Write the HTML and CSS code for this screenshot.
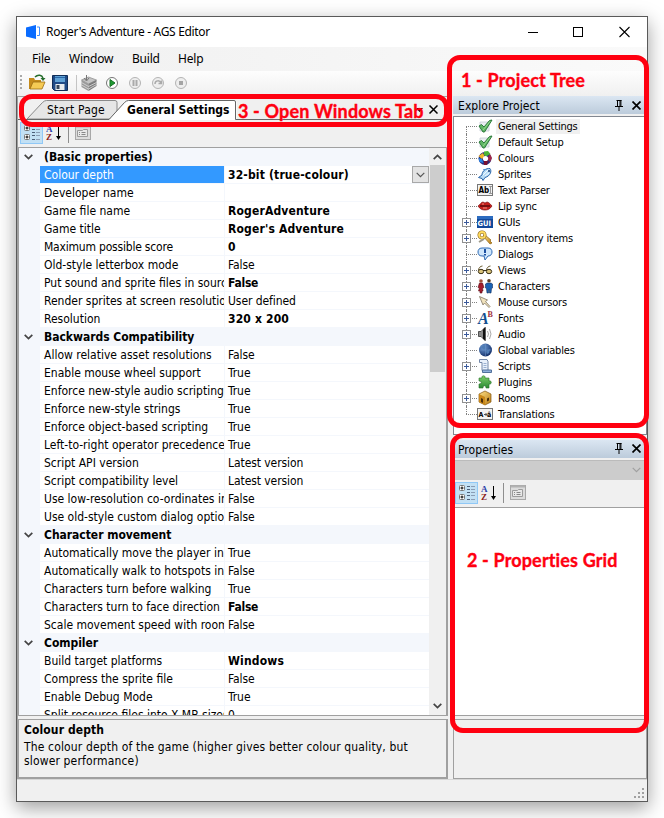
FILE: index.html
```html
<!DOCTYPE html>
<html lang="en">
<head>
<meta charset="utf-8">
<title>Roger's Adventure - AGS Editor</title>
<link rel="stylesheet" href="styles.css">
</head>
<body>
<svg class="defs" width="0" height="0">
  <defs>
    <linearGradient id="gold" x1="0" y1="0" x2="1" y2="1"><stop offset="0" stop-color="#ffe38a"/><stop offset="1" stop-color="#b87a10"/></linearGradient>
    <linearGradient id="green" x1="0" y1="0" x2="0" y2="1"><stop offset="0" stop-color="#7fd06a"/><stop offset="1" stop-color="#2c8a35"/></linearGradient>
    <radialGradient id="globe" cx=".35" cy=".3" r=".8"><stop offset="0" stop-color="#6f9cd6"/><stop offset="1" stop-color="#0c2660"/></radialGradient>
  </defs>
  <symbol id="check" viewBox="0 0 16 16"><path d="M3 4h9v9H3z" fill="#e9edf2" stroke="#c5ccd6" stroke-width=".8"/><path d="M2 8l2.500-1.500L7 9l5.500-6.500L15 2 7.500 14H6z" fill="#5fb565" stroke="#2c7a3c" stroke-width="1"/><path d="M6 12l7-8.500" stroke="#94dc8c" stroke-width="1"/></symbol>
  <symbol id="colours" viewBox="0 0 16 16"><circle cx="8" cy="8.500" r="6.500" fill="#2b2a78"/><path d="M7 1.500l4-.5 2.500 3L9 6.500 7 5z" fill="#4db536"/><path d="M13 4l2 4-2 4-3-3z" fill="#a02848"/><path d="M1.500 6L6 3l1.500 3.500L5 9z" fill="#f2b62a"/><path d="M1.500 8l3.500 1 1.500 4-4-1z" fill="#2784e6"/><path d="M7 11l4 0-1 4H7z" fill="#7a1030"/><circle cx="8.500" cy="8.500" r="2.600" fill="#fff"/></symbol>
  <symbol id="sprites" viewBox="0 0 16 16"><path d="M1.500 11.500L5 9c0-4 4-7 8-6.500C15 5 13.500 10 8 11.500l-2 3-1-2z" fill="#b8dcf6" stroke="#2864a8"/><path d="M6 9l5-5M8 10l4-3" stroke="#f2faff"/><path d="M7 5l-1-2 4 0z" fill="#4f8fd0"/><circle cx="12" cy="5" r="1" fill="#173b70"/></symbol>
  <symbol id="lips" viewBox="0 0 16 16"><path d="M1 8c2-1 3-4 5-4l2 1 2-1c2 0 4 3 5 4-2 3-4 4-7 4S3 11 1 8z" fill="#c8201c" stroke="#7c1010" stroke-width=".7"/><path d="M3 8h10" stroke="#200"/><path d="M5 6h2M6 10h4" stroke="#f28b7c"/></symbol>
  <symbol id="keys" viewBox="0 0 16 16"><path d="M6 6l7 8 2-1-2-2 1-1-6-5z" fill="url(#gold)" stroke="#8e6414" stroke-width=".7"/><circle cx="5" cy="5" r="3" fill="none" stroke="#8e6414" stroke-width="3"/><circle cx="5" cy="5" r="3" fill="none" stroke="#ffdc60" stroke-width="1.800"/><path d="M2 12l5-3" stroke="#9d9888" stroke-width="2"/></symbol>
  <symbol id="dialogs" viewBox="0 0 16 16"><path d="M5 2h6c3 0 4 2 4 4s-1 4-4 4l-3 4-1-4H5C2 10 1 8 1 6s1-4 4-4z" fill="#cfe6fb" stroke="#2e6bb5"/><path d="M8 3v4M8 8v1.500" stroke="#1c4fa0" stroke-width="2"/></symbol>
  <symbol id="views" viewBox="0 0 16 16"><path d="M1.500 8c0-2 2-4 4-4M9.500 8c0-2 2-4 4-4" fill="none" stroke="#6b5c30"/><ellipse cx="4" cy="9.500" rx="2.700" ry="2.200" fill="#d9c27a" stroke="#3b3218"/><ellipse cx="12" cy="9.500" rx="2.700" ry="2.200" fill="#d9c27a" stroke="#3b3218"/><path d="M6 8.500h4" stroke="#3b3218"/></symbol>
  <symbol id="chars" viewBox="0 0 16 16"><path d="M2.500 5h3L7 9.500l-1.500.5.5 3H5v2H3v-2H1.500l1-3L1 9.500z" fill="#a51c2c" stroke="#5a0d18" stroke-width=".6"/><circle cx="4" cy="3" r="1.800" fill="#a3503a"/><path d="M10 5h4l1.500 1v4l-1 .5-.500 4.500h-1.500v-3h-1v3H10l-.5-4.500-1-.5V6z" fill="#1a62b4" stroke="#0d2f60" stroke-width=".6"/><circle cx="12" cy="2.800" r="1.800" fill="#5b3a20"/></symbol>
  <symbol id="cursor" viewBox="0 0 16 16"><path d="M2.500 2.500l8 3.500-2 1.500 4.500 5-1 1-4.500-4.500L6 11z" fill="#f0e2bc" stroke="#8c8270" stroke-width=".9"/></symbol>
  <symbol id="audio" viewBox="0 0 16 16"><path d="M1.500 5.500H4l4-4v13l-4-4H1.500z" fill="#8a8a8a" stroke="#333" stroke-width=".8"/><path d="M6 3.500l2.500-2.500v14L6 12.500z" fill="#111"/><path d="M10.500 5q2 3 0 6M12.500 3q3 5 0 10" stroke="#aaa" fill="none"/></symbol>
  <symbol id="globals" viewBox="0 0 16 16"><circle cx="8.500" cy="8" r="6.500" fill="url(#globe)"/><path d="M4 5l3-2 2 2-2 3zM9 9l4-2-1 4-2 1z" fill="#4f7cb4"/><path d="M2.500 8h12M8.500 2v12" stroke="#6f97c9" stroke-width=".5"/></symbol>
  <symbol id="scripts" viewBox="0 0 16 16"><path d="M2.500 1.500H10l1 2v9H5v-8H2.500z" fill="#e9f1fb" stroke="#7287a8"/><path d="M5.500 12h9v2.500h-9z" fill="#8fb0dc" stroke="#53719b"/><path d="M6.500 5.500h3M6.500 7.500h3M6.500 9.500h3" stroke="#9cb2d2"/></symbol>
  <symbol id="plugins" viewBox="0 0 16 16"><path d="M2 4h3c-1-3 4-3 3 0h4v3c3-1 3 4 0 3v4H9c0-3-3-3-3 0H2v-4c3 0 3-3 0-3z" fill="url(#green)" stroke="#28702a" stroke-width=".6"/></symbol>
  <symbol id="rooms" viewBox="0 0 16 16"><path d="M8 1l6 3v8l-6 3-6-3V4z" fill="url(#gold)" stroke="#815411" stroke-width=".7"/><path d="M2 4l6 3v8l-6-3z" fill="#c98718"/><path d="M4 8l2 1v4l-2-1z" fill="#4b2f0a"/><path d="M10 8.500l2-1v3l-2 1z" fill="#4b2f0a"/></symbol>

  <symbol id="categorized" viewBox="0 0 16 16"><rect x=".5" y=".5" width="5" height="5" rx="1" fill="#fff" stroke="#777"/><rect x=".5" y="9.500" width="5" height="5" rx="1" fill="#fff" stroke="#777"/><path d="M1.500 3h3M3 1.500v3M1.500 12h3M3 10.500v3" stroke="#000"/><path d="M8 1.500h3M8 4.500h3M8 7.500h3M8 10.500h3M8 14.500h3" stroke="#4b5e78"/><path d="M12 1.500h4M12 4.500h4M12 7.500h4M12 10.500h4M12 14.500h4" stroke="#8a9db5"/></symbol>
  <symbol id="pages" viewBox="0 0 16 16"><rect x=".5" y=".5" width="15" height="14" fill="#dcdcdc" stroke="#a8a8a8"/><path d="M1 1.500h14" stroke="#b2b2b2" stroke-width="2"/><path d="M2.500 11.500v-6h5l1-1h4v7z" fill="#e8e8e8" stroke="#9c9c9c"/><path d="M4 7.500h1M6.500 7.500h4M4 9.500h1M6.500 9.500h4" stroke="#888"/></symbol>
  <symbol id="pin" viewBox="0 0 8 11"><path d="M2.500 0v6M1.500 .5h5M5 0v6M5.900 0v6M0 6.500h8M4 7v4" stroke="#000" fill="none"/></symbol>
  <symbol id="x" viewBox="0 0 9 9"><path d="M.5 .5l8 8M8.500 .5l-8 8" stroke="#000" stroke-width="1.700"/></symbol>
  <symbol id="chev" viewBox="0 0 9 6"><path d="M.7 .8l3.800 3.800L8.300 .8" fill="none" stroke="#444" stroke-width="1.700"/></symbol>
</svg>

<div class="window">
  <header class="titlebar">
    <svg class="app-icon" width="14" height="14" viewBox="0 0 14 14"><path d="M0 2.500L10 0v14L0 11.500z" fill="#0a6cff"/><path d="M11 2h2.500v8.500H11" fill="none" stroke="#3f8dff"/></svg>
    <span class="title">Roger's Adventure - AGS Editor</span>
    <svg class="win-buttons" width="103" height="12" viewBox="0 0 103 12" fill="none" stroke="#000"><path d="M0 6.500h10"/><rect x="45.500" y="1.500" width="9" height="9"/><path d="M91.500 1l10 10M101.500 1l-10 10" stroke-width="1.100"/></svg>
  </header>
  <nav class="menubar"><span class="m-file">File</span><span class="m-window">Window</span><span class="m-build">Build</span><span class="m-help">Help</span></nav>
  <div class="toolbar">
    <svg width="180" height="24" viewBox="0 0 180 24">
      <path d="M4 4v14" stroke="#aaa" stroke-width="2" stroke-dasharray="2 2"/>
      <g><path d="M12 7h5l1 2h6v9H12z" fill="#c48a1c"/><path d="M13 18l3-7h12l-3 7z" fill="#f5ca55" stroke="#9a6c12" stroke-width=".8"/><path d="M18 6c3-3 7-2 8 1" fill="none" stroke="#256d2c" stroke-width="1.500"/><path d="M23.500 7h5l-2.500 3z" fill="#256d2c"/></g>
      <g><path d="M35.500 4.500h15v15h-13l-2-2z" fill="#1f4a86" stroke="#102d58"/><path d="M38 5h10v6H38z" fill="#5fa2d6"/><path d="M38 6.500h10" stroke="#2c68a8"/><path d="M38.500 13h9v6h-9z" fill="#e8ecef"/><path d="M39.500 14h3v4h-3z" fill="#34465c"/></g>
      <path d="M59.500 4v16" stroke="#c4c4c4"/>
      <g><path d="M64.500 9l7-3 8 3-8 4z" fill="#c4c4c4" stroke="#888" stroke-width=".7"/><path d="M64.500 9l7 4v7l-7-4z" fill="#9a9a9a"/><path d="M71.500 13l8-4v6l-8 5z" fill="#7c7c7c"/><path d="M64.500 11.500l7 4 8-4M64.500 14l7 4 8-4.500" stroke="#ddd" stroke-width=".8" fill="none"/><path d="M69.500 4v5M67 7l2.500 3L72 7" stroke="#777" fill="none"/></g>
      <g><circle cx="95" cy="12" r="5.500" fill="#fff" stroke="#777"/><path d="M93 8.500l5 3.500-5 3.500z" fill="#1f9a32" stroke="#167125"/></g>
      <g fill="#eee" stroke="#b4b4b4"><circle cx="118" cy="12" r="5.500"/><circle cx="141" cy="12" r="5.500"/><circle cx="164" cy="12" r="5.500"/></g>
      <path d="M116.500 9v6M119.500 9v6" stroke="#aaa" stroke-width="2"/><path d="M138 13c0-4 5-4 6-1M144.500 9.500v3h-3" stroke="#aaa" stroke-width="1.500" fill="none"/><path d="M162 10h4v4h-4z" fill="#a4a4a4"/>
    </svg>
  </div>

  <div class="work">
    <section class="left">
      <div class="tabs">
        <svg class="tab-shapes" width="430" height="24" viewBox="0 0 430 24">
          <path d="M0 .5h430" stroke="#a0a0a0"/>
          <path d="M9 23L24.500 6.500q2-2 4-2H97q2 0 2 2V23z" fill="#e6e6e6" stroke="#8a8a8a"/>
          <path d="M91 24L106.500 6.500q2-2 4-2H217q1.500 0 1.500 1.500V24z" fill="#fff"/>
          <path d="M0 23.500h91L106.500 6.500q2-2 4-2H216q1.500 0 1.500 1.500V23.500H430" fill="none" stroke="#666"/>
        </svg>
        <span class="tab tab-start">Start Page</span><span class="tab tab-general">General Settings</span>
        <svg class="tab-ctl" width="22" height="9" viewBox="0 0 22 9"><path d="M0 3h7L3.500 7z"/><path d="M13.500 .5l8 8M21.500 .5l-8 8" stroke="#000" stroke-width="1.500"/></svg>
      </div>
      <div class="pgbar"><span class="toggle"><svg width="16" height="16"><use href="#categorized"/></svg></span><svg class="az" width="16" height="16" viewBox="0 0 16 16"><text x="0" y="7" class="ico-a">A</text><text x="0" y="15" class="ico-z">Z</text><path d="M12.500 1v11" stroke="#000"/><path d="M10 11h5l-2.500 4z"/></svg><i class="sep"></i><svg width="16" height="16"><use href="#pages"/></svg></div>
      <div class="gridbox">
        <div class="rows">
          <div class="head"><svg width="9" height="6"><use href="#chev"/></svg>(Basic properties)</div>
          <div class="row selected"><span>Colour depth</span><b>32-bit (true-colour)</b><em class="drop"><svg width="9" height="6" viewBox="0 0 9 6"><path d="M.7 .8l3.800 3.800L8.300 .8" fill="none" stroke="#555" stroke-width="1.200"/></svg></em></div>
          <div class="row"><span>Developer name</span></div>
          <div class="row"><span>Game file name</span><b>RogerAdventure</b></div>
          <div class="row"><span>Game title</span><b>Roger's Adventure</b></div>
          <div class="row tight"><span>Maximum possible score</span><b>0</b></div>
          <div class="row"><span>Old-style letterbox mode</span><q>False</q></div>
          <div class="row"><span>Put sound and sprite files in source</span><b class="snug">False</b></div>
          <div class="row"><span>Render sprites at screen resolution</span><q>User defined</q></div>
          <div class="row"><span>Resolution</span><b>320 x 200</b></div>
          <div class="head"><svg width="9" height="6"><use href="#chev"/></svg>Backwards Compatibility</div>
          <div class="row"><span>Allow relative asset resolutions</span><q>False</q></div>
          <div class="row"><span>Enable mouse wheel support</span><q>True</q></div>
          <div class="row"><span>Enforce new-style audio scripting</span><q>True</q></div>
          <div class="row"><span>Enforce new-style strings</span><q>True</q></div>
          <div class="row"><span>Enforce object-based scripting</span><q>True</q></div>
          <div class="row"><span>Left-to-right operator precedence</span><q>True</q></div>
          <div class="row"><span>Script API version</span><q>Latest version</q></div>
          <div class="row"><span>Script compatibility level</span><q>Latest version</q></div>
          <div class="row"><span>Use low-resolution co-ordinates in</span><q>False</q></div>
          <div class="row"><span>Use old-style custom dialog options</span><q>False</q></div>
          <div class="head"><svg width="9" height="6"><use href="#chev"/></svg>Character movement</div>
          <div class="row"><span>Automatically move the player in</span><q>True</q></div>
          <div class="row"><span>Automatically walk to hotspots in</span><q>False</q></div>
          <div class="row"><span>Characters turn before walking</span><q>True</q></div>
          <div class="row"><span>Characters turn to face direction</span><b class="snug">False</b></div>
          <div class="row"><span>Scale movement speed with room</span><q>False</q></div>
          <div class="head"><svg width="9" height="6"><use href="#chev"/></svg>Compiler</div>
          <div class="row"><span>Build target platforms</span><b>Windows</b></div>
          <div class="row"><span>Compress the sprite file</span><q>False</q></div>
          <div class="row"><span>Enable Debug Mode</span><q>True</q></div>
          <div class="row"><span>Split resource files into X MB sizes</span><q>0</q></div>
        </div>
        <div class="scroll"><svg width="9" height="6" class="flip"><use href="#chev"/></svg><i class="thumb"></i><svg width="9" height="6"><use href="#chev"/></svg></div>
      </div>
      <div class="desc"><b>Colour depth</b><p>The colour depth of the game (higher gives better colour quality, but<br>slower performance)</p></div>
    </section>

    <aside class="right">
      <div class="panel-head"><span>Explore Project</span><svg width="8" height="11"><use href="#pin"/></svg><svg width="9" height="9"><use href="#x"/></svg></div>
      <ul class="tree">
        <li class="current"><i></i><svg><use href="#check"/></svg><span>General Settings</span></li>
        <li><i></i><svg><use href="#check"/></svg><span>Default Setup</span></li>
        <li><i></i><svg><use href="#colours"/></svg><span>Colours</span></li>
        <li><i></i><svg><use href="#sprites"/></svg><span>Sprites</span></li>
        <li><i></i><svg viewBox="0 0 16 16"><rect x=".5" y="2.500" width="15" height="11" fill="#f3f3f3" stroke="#777"/><path d="M13.500 4v8M12 4.500h3M12 11.500h3" stroke="#999"/><text x="1.500" y="11" class="ico-abl">Ab</text></svg><span>Text Parser</span></li>
        <li><i></i><svg><use href="#lips"/></svg><span>Lip sync</span></li>
        <li class="plus"><i></i><svg viewBox="0 0 16 16"><rect y="2" width="16" height="12" fill="#12499b"/><path d="M0 2h16v3H0z" fill="#2c6cc0"/><text x=".5" y="11.500" class="ico-gui">GUI</text></svg><span>GUIs</span></li>
        <li class="plus"><i></i><svg><use href="#keys"/></svg><span>Inventory items</span></li>
        <li><i></i><svg><use href="#dialogs"/></svg><span>Dialogs</span></li>
        <li class="plus"><i></i><svg><use href="#views"/></svg><span>Views</span></li>
        <li class="plus"><i></i><svg><use href="#chars"/></svg><span>Characters</span></li>
        <li class="plus"><i></i><svg><use href="#cursor"/></svg><span>Mouse cursors</span></li>
        <li class="plus"><i></i><svg viewBox="0 0 16 16"><text x="1" y="14" class="ico-fa">A</text><text x="10.500" y="7" class="ico-fb">B</text></svg><span>Fonts</span></li>
        <li class="plus"><i></i><svg><use href="#audio"/></svg><span>Audio</span></li>
        <li><i></i><svg><use href="#globals"/></svg><span>Global variables</span></li>
        <li class="plus"><i></i><svg><use href="#scripts"/></svg><span>Scripts</span></li>
        <li><i></i><svg><use href="#plugins"/></svg><span>Plugins</span></li>
        <li class="plus"><i></i><svg><use href="#rooms"/></svg><span>Rooms</span></li>
        <li><i></i><svg viewBox="0 0 16 16"><rect x=".5" y="2.500" width="15" height="11" fill="#f3f3f3" stroke="#777"/><path d="M7 8.500h3M8.500 7l1.500 1.500L8.500 10" stroke="#555" fill="none"/><text x="1.500" y="11" class="ico-tr">A</text><text x="10" y="11" class="ico-tr">â</text></svg><span>Translations</span></li>
      </ul>
      <div class="panel-head props"><span>Properties</span><svg width="8" height="11"><use href="#pin"/></svg><svg width="9" height="9"><use href="#x"/></svg></div>
      <div class="combo"><svg width="9" height="6" viewBox="0 0 9 6"><path d="M.7 .8l3.800 3.800L8.300 .8" fill="none" stroke="#a0a0a0" stroke-width="1.200"/></svg></div>
      <div class="pgbar"><span class="toggle"><svg width="16" height="16"><use href="#categorized"/></svg></span><svg class="az" width="16" height="16" viewBox="0 0 16 16"><text x="0" y="7" class="ico-a">A</text><text x="0" y="15" class="ico-z">Z</text><path d="M12.500 1v11" stroke="#000"/><path d="M10 11h5l-2.500 4z"/></svg><i class="sep"></i><svg width="16" height="16"><use href="#pages"/></svg></div>
      <div class="props-body"></div>
      <div class="props-desc"></div>
    </aside>
  </div>
  <footer class="status"><svg width="11" height="11" viewBox="0 0 11 11" fill="#a0a0a0"><path d="M8 0h2v2H8zM4 4h2v2H4zM8 4h2v2H8zM0 8h2v2H0zM4 8h2v2H4zM8 8h2v2H8z"/></svg></footer>
</div>

<div class="mark mark-tabs"><span>3 - Open Windows Tab</span></div>
<div class="mark mark-tree"><span>1 - Project Tree</span></div>
<div class="mark mark-props"><span>2 - Properties Grid</span></div>
</body>
</html>
```
FILE: styles.css
```css
*, *::before, *::after { box-sizing: border-box; }
body { margin: 0; width: 664px; height: 818px; overflow: hidden; position: relative; background: #fff; color: #000; font: 11px/16px "DejaVu Sans Condensed", "DejaVu Sans", sans-serif; }
svg { display: block; flex: none; }
.defs { position: absolute; }
.window { width: 632px; height: 786px; margin: 16px; border: 1px solid #5a5a5a; background: #f0f0f0; box-shadow: 0 6px 18px rgba(0,0,0,.38); display: flex; flex-direction: column; }

.titlebar { height: 30px; background: #fff; display: flex; align-items: center; padding: 0 16px 0 9px; font: 12px/16px "Noto Sans", sans-serif; }
.title { margin-left: 6px; flex: 1; letter-spacing: -.33px; }
.menubar { height: 24px; background: linear-gradient(90deg, #f0f0f0, #fafafa); font: 12px/24px "Noto Sans", sans-serif; display: flex; padding-left: 15px; }
.menubar span { letter-spacing: -.2px; }
.m-file { width: 37px; } .m-window { width: 63px; } .m-build { width: 46px; }
.toolbar { height: 25px; background: linear-gradient(#fdfdfd, #f0f0f0); }

.work { height: 683px; display: flex; justify-content: space-between; }
.left { width: 431px; display: flex; flex-direction: column; border-left: 1px solid #a0a0a0; }
.tabs { height: 24px; position: relative; display: flex; align-items: center; padding: 3px 10px 0 29px; font-size: 12px; }
.tab-shapes { position: absolute; left: 0; top: 0; }
.tab { position: relative; }
.tab-start { width: 80px; letter-spacing: .2px; }
.tab-general { flex: 1; font-weight: bold; letter-spacing: .02px; }
.tab-ctl { position: relative; }
.pgbar { height: 27px; display: flex; align-items: center; padding: 0 0 1px 2px; }
.toggle { width: 23px; height: 22px; border: 1px solid #90c8f6; background: #c2e0f4; display: flex; align-items: center; justify-content: center; }
.az { margin-left: 3px; }
.sep { width: 1px; height: 20px; background: #8e8e8e; margin: 0 6px; }

.gridbox { height: 569px; border: 1px solid #a0a0a0; border-right-width: 2px; display: flex; background: #fff; overflow: hidden; }
.rows { width: 410px; font-size: 12px; line-height: 19px; overflow: hidden; }
.head { height: 18px; background: #f4f7fc; font-weight: bold; display: flex; align-items: center; letter-spacing: -.03px; }
.head svg { margin: 0 11px 0 5px; }
.row { height: 18px; border-left: 21px solid #f4f7fc; border-bottom: 1px solid #f4f7fc; display: flex; white-space: nowrap; }
.row span { width: 185px; padding-left: 4px; border-right: 1px solid #f4f7fc; overflow: hidden; flex: none; }
.row.tight span { letter-spacing: -.2px; }
.row b, .row q { padding-left: 3px; flex: 1; }
.row b { letter-spacing: .16px; }
.row b.snug { letter-spacing: -.25px; }
.row q { quotes: none; letter-spacing: -.07px; }
.selected span { background: #3399ff; color: #fff; }
.drop { width: 17px; height: 17px; border: 1px solid #a8a8a8; background: #e3e3e3; display: flex; align-items: center; justify-content: center; }
.scroll { flex: 1; background: #f0f0f0; display: flex; flex-direction: column; align-items: center; padding: 6px 0; }
.flip { transform: scaleY(-1); }
.thumb { width: 15px; height: 207px; background: #cdcdcd; margin: 5px 0 auto; }
.desc { height: 60px; margin-top: 3px; border: 1px solid #a0a0a0; border-right-width: 2px; border-bottom-width: 2px; padding: 2px 5px; font-size: 12px; }
.desc b { letter-spacing: .1px; }
.desc p { margin: 2px 0 0; line-height: 14px; white-space: nowrap; letter-spacing: .15px; }

.right { width: 194px; display: flex; flex-direction: column; }
.panel-head { height: 18px; background: linear-gradient(#dbe6f2, #bccbdb); display: flex; align-items: center; gap: 9px; padding: 0 6px 0 5px; font-size: 12px; }
.panel-head span { flex: 1; padding-top: 2px; line-height: 16px; letter-spacing: .06px; }
.tree { list-style: none; margin: 2px 0 0; padding: 1px 0 0 8px; height: 319px; background: #fff; border: 1px solid #828790; }
.tree li { height: 16px; display: flex; align-items: center; position: relative; }
.tree li::before { content: ""; position: absolute; left: 4px; top: 0; height: 16px; border-left: 1px dotted #808080; }
.tree li:first-child::before { top: 8px; height: 8px; }
.tree li:last-child::before { height: 8px; }
.tree i { width: 11px; margin-left: 4px; border-top: 1px dotted #808080; }
.tree svg { width: 16px; height: 16px; }
.tree span { margin-left: 3px; padding: 0 2px; line-height: 15px; letter-spacing: -.2px; }
.tree .current span { background: #f0f0f0; }
.tree .plus::after { content: ""; position: absolute; left: 0; top: 4px; width: 9px; height: 9px; border: 1px solid #919191; background: linear-gradient(#3b5a9a, #3b5a9a) 1px 3px / 5px 1px no-repeat, linear-gradient(#3b5a9a, #3b5a9a) 3px 1px / 1px 5px no-repeat, #fff; }
.props { margin-top: 5px; }
.combo { height: 21px; margin-top: 2px; background: #ccc; display: flex; align-items: center; justify-content: flex-end; padding-right: 6px; border-top: 1px solid #bbb; }
.props-body { height: 209px; background: #fff; border: 1px solid #a0a0a0; }
.props-desc { height: 60px; margin-top: 3px; border: 1px solid #a0a0a0; }
.status { flex: 1; border-top: 1px solid #d7d7d7; display: flex; justify-content: flex-end; align-items: flex-end; padding: 0 2px 2px 0; }

.mark { position: absolute; border: 5px solid #ff0010; border-radius: 13px; color: #ff0010; font: bold 18px/22px Lato, sans-serif; letter-spacing: .15px; -webkit-text-stroke: .35px #ff0010; font-variant-ligatures: none; white-space: nowrap; }
.mark span { display: block; }
.mark-tabs { left: 19px; top: 94px; width: 430px; height: 33px; }
.mark-tabs span { padding: 1px 0 0 214px; }
.mark-tree { left: 447px; top: 55px; width: 202px; height: 373px; }
.mark-tree span { padding: 9px 0 0 9px; }
.mark-props { left: 450px; top: 433px; width: 199px; height: 300px; }
.mark-props span { padding: 111px 0 0 12px; }

.ico-abl { font: bold 8px "DejaVu Sans Condensed", sans-serif; }
.ico-gui { font: bold 7.500px "DejaVu Sans Condensed", sans-serif; fill: #fff; }
.ico-tr { font: bold 7px "DejaVu Sans Condensed", sans-serif; }
.ico-fa { font: italic bold 16px "Liberation Serif", serif; fill: #14508f; }
.ico-fb { font: bold 8px "Liberation Serif", serif; fill: #a03040; }
.ico-a { font: bold 9px "Liberation Serif", serif; fill: #2c3fa8; }
.ico-z { font: bold 9px "Liberation Serif", serif; fill: #8c1c1c; }
```
